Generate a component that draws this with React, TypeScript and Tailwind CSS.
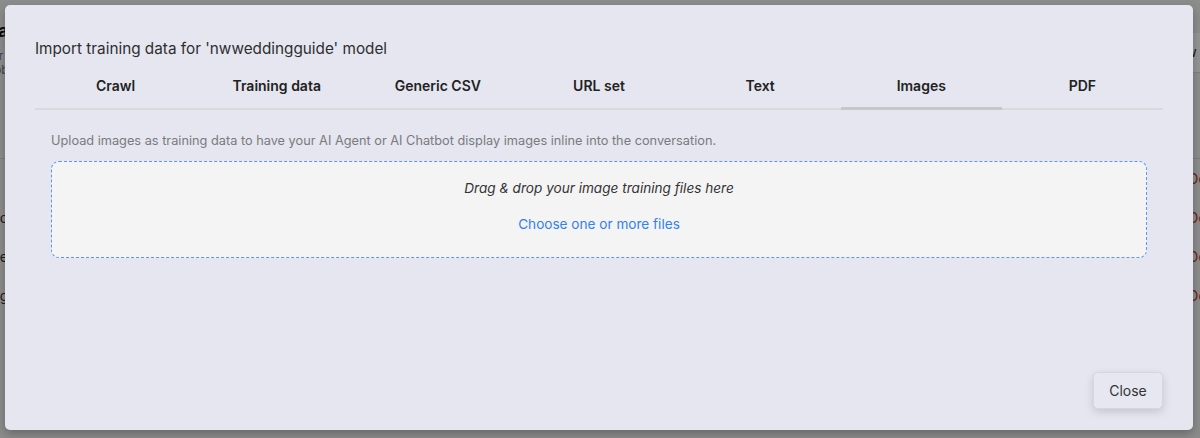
import React from "react";

const tabs = ["Crawl", "Training data", "Generic CSV", "URL set", "Text", "Images", "PDF"];

export default function App() {
  return (
    <div className="relative w-[1200px] h-[438px] overflow-hidden bg-[#f1f1f3] font-['Inter','Liberation_Sans',sans-serif]">
      {/* underlying page */}
      <div className="flex flex-col w-full">
        <div className="flex h-[33px] items-end justify-between">
          <span className="ml-[-8px] text-[17px] font-bold leading-[20px] text-[#111] mb-[-8px]">ta</span>
        </div>
        <div className="flex h-[40px] justify-between">
          <div className="ml-[-6px] mt-[16px] flex flex-col text-[12px] leading-[14px] text-[#777]">
            <span>rr</span>
            <span>bb</span>
          </div>
          <div className="w-[12px] h-[40px] bg-white border-b border-[#dcdcdc] flex items-center">
            <span className="ml-[-2px] text-[13px] text-[#222]">w</span>
          </div>
        </div>
        <div className="h-[85px]" />
        <div className="h-px bg-[#d8d8d8]" />
        {["", "c", "e", "g"].map((l, i) => (
          <div key={i} className="flex h-[39px] items-center justify-between">
            <span className="ml-[-8px] text-[14px] text-[#333]">{l ? "a" + l : ""}</span>
            <span className="mr-[-10px] text-[14px] text-[#c0392b]">Del</span>
          </div>
        ))}
      </div>

      {/* overlay */}
      <div className="absolute inset-0 bg-black/[0.42] flex items-start justify-start p-[5px]">
        <div className="w-[1188px] h-[425px] bg-[#e5e6ef] rounded-[5px] shadow-[0_4px_10px_rgba(0,0,0,0.25)] flex flex-col px-[30px] pt-[32px] pb-[21px]">
          <h2 className="text-[15.3px] leading-[24px] text-[#2e2e30] font-normal">
            Import training data for 'nwweddingguide' model
          </h2>
          <div className="mt-[2px] flex border-b-2 border-[#d8d8dd]">
            {tabs.map((t) => (
              <div
                key={t}
                className={
                  t === "Images"
                    ? "flex-1 h-[47px] mb-[-2px] flex items-center justify-center border-b-[3px] border-[#c6c6cb] text-[14px] font-semibold text-[#222]"
                    : "flex-1 h-[47px] mb-[-2px] flex items-center justify-center border-b-[3px] border-transparent text-[14px] font-semibold text-[#222]"
                }
              >
                {t}
              </div>
            ))}
          </div>
          <div className="flex-1 px-4 pt-[22px]">
            <p className="text-[12.75px] leading-[18px] text-[#7a7a80]">
              Upload images as training data to have your AI Agent or AI Chatbot display images inline into the conversation.
            </p>
            <div className="mt-[11px] h-[97px] rounded-[8px] border border-dashed border-[#5e95f6] bg-[#f4f4f5] flex flex-col items-center pt-[16px] gap-4">
              <span className="text-[13.6px] leading-[20px] italic text-[#333]">Drag &amp; drop your image training files here</span>
              <span className="text-[13.6px] leading-[20px] text-[#3281f0] cursor-pointer">Choose one or more files</span>
            </div>
          </div>
          <div className="flex justify-end">
            <button className="w-[70px] h-[37px] rounded-[5px] border border-[#d3d7e4] bg-[#e6e7f0] text-[14px] text-[#333] shadow-[0_3px_8px_rgba(0,0,0,0.15)]">
              Close
            </button>
          </div>
        </div>
      </div>
    </div>
  );
}
